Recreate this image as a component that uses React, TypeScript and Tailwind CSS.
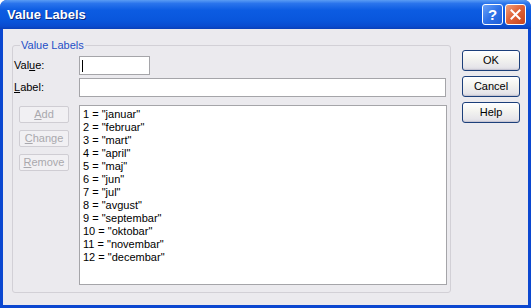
import React from "react";

const items = [
  "januar",
  "februar",
  "mart",
  "april",
  "maj",
  "jun",
  "jul",
  "avgust",
  "septembar",
  "oktobar",
  "novembar",
  "decembar",
];

function DisabledButton({ mnemonic, rest }: { mnemonic: string; rest: string }) {
  return (
    <div className="flex h-[17px] w-[50px] items-center justify-center rounded-[2px] border border-[#cfcdd3] bg-[#f1f0f3] text-[11px] leading-none text-[#a9a8ad]">
      <span>
        <span className="underline">{mnemonic}</span>
        {rest}
      </span>
    </div>
  );
}

function XpButton({ children }: { children: React.ReactNode }) {
  return (
    <div className="flex h-[21px] w-[58px] items-center justify-center rounded-[3px] border border-[#1c3f7a] bg-[linear-gradient(180deg,#ffffff_0%,#f4f4f0_40%,#e6e5ea_85%,#d4d3dc_100%)] text-[11px] leading-none text-black shadow-[inset_0_-1px_0_#c7c6d3,inset_0_1px_0_#ffffff]">
      {children}
    </div>
  );
}

export default function App() {
  return (
    <div className="h-[308px] w-[531px] bg-white font-['Liberation_Sans',Arial,sans-serif]">
      <div className="flex h-full w-full flex-col rounded-t-[7px] bg-[#0b47d0]">
        {/* title bar */}
        <div className="flex h-[29px] items-center rounded-t-[7px] bg-[linear-gradient(180deg,#5a9cf4_0%,#2a74ec_12%,#0c5ce2_35%,#0956dc_70%,#0a4cd0_90%,#0a3fb8_100%)] pl-[7px] pr-[5px]">
          <span className="text-[13px] font-bold text-white [text-shadow:1px_1px_0_#0a2a80]">
            Value Labels
          </span>
          <div className="ml-auto flex gap-[2px]">
            <div className="flex h-[21px] w-[21px] items-center justify-center rounded-[3px] border border-white bg-[linear-gradient(135deg,#6aa2f8_0%,#2f72e8_50%,#1f5ed8_100%)] text-[15px] font-bold leading-none text-white">
              ?
            </div>
            <div className="flex h-[21px] w-[21px] items-center justify-center rounded-[3px] border border-white bg-[linear-gradient(135deg,#f0a07c_0%,#e0643a_45%,#c7441c_100%)]">
              <svg width="11" height="11" viewBox="0 0 11 11">
                <path d="M1.5 1.5 L9.5 9.5 M9.5 1.5 L1.5 9.5" stroke="white" strokeWidth="2" strokeLinecap="square" />
              </svg>
            </div>
          </div>
        </div>

        {/* client area */}
        <div className="mx-[3px] mb-[3px] flex flex-1 bg-[#ebeaee] pl-[9px] pt-[9px]">
          <fieldset className="h-[255px] w-[437px] rounded-[3px] border border-[#d2d0d6] pl-[1px] pr-[3px]">
            <legend className="ml-[6px] px-[1px] text-[11px] leading-[14px] text-[#1f4fc6]">
              Value Labels
            </legend>
            <div className="mt-[4px] flex h-[19px] items-center">
              <span className="w-[65px] text-[11px] text-black">
                Val<span className="underline">u</span>e:
              </span>
              <div className="flex h-[19px] w-[71px] items-center border border-[#a5a5a9] bg-white pl-[2px]">
                <div className="h-[12px] w-px bg-black" />
              </div>
            </div>
            <div className="mt-[3px] flex h-[19px] items-center">
              <span className="w-[65px] text-[11px] text-black">
                <span className="underline">L</span>abel:
              </span>
              <div className="h-[19px] w-[367px] border border-[#a5a5a9] bg-white" />
            </div>
            <div className="mt-[8px] flex">
              <div className="ml-[5px] mt-[1px] flex w-[50px] flex-col gap-[7px]">
                <DisabledButton mnemonic="A" rest="dd" />
                <DisabledButton mnemonic="C" rest="hange" />
                <DisabledButton mnemonic="R" rest="emove" />
              </div>
              <div className="ml-[10px] h-[180px] w-[368px] border border-[#a5a5a9] bg-white pl-[3px] pt-[2px]">
                {items.map((m, i) => (
                  <div key={m} className="h-[13px] text-[11px] leading-[13px] text-black">
                    {i + 1} = "{m}"
                  </div>
                ))}
              </div>
            </div>
          </fieldset>

          <div className="ml-[11px] mt-[12px] flex flex-col gap-[5px]">
            <XpButton>OK</XpButton>
            <XpButton>Cancel</XpButton>
            <XpButton>Help</XpButton>
          </div>
        </div>
      </div>
    </div>
  );
}
